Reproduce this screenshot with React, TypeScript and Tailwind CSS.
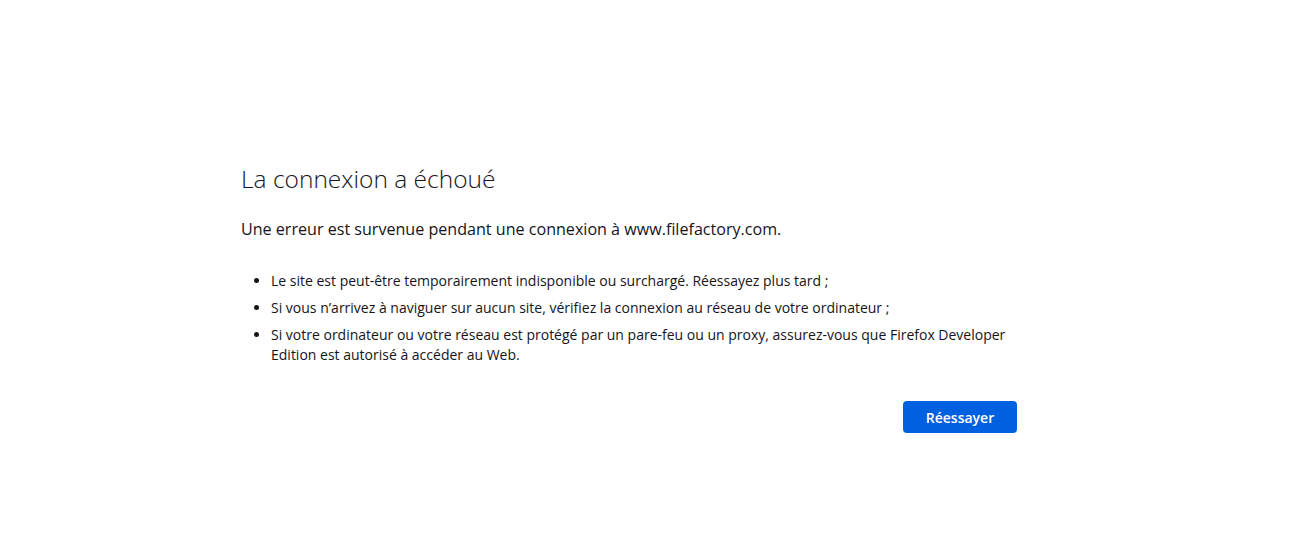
import React from 'react'

const items = [
  "Le site est peut-être temporairement indisponible ou surchargé. Réessayez plus tard ;",
  "Si vous n’arrivez à naviguer sur aucun site, vérifiez la connexion au réseau de votre ordinateur ;",
  "Si votre ordinateur ou votre réseau est protégé par un pare-feu ou un proxy, assurez-vous que Firefox Developer Edition est autorisé à accéder au Web.",
]

export default function App() {
  return (
    <div className="min-h-[549px] w-full bg-white text-[#15141a] font-['Open_Sans',sans-serif]">
      <div className="pl-[241px] pt-[161px]">
        <div className="w-[776px]">
          <h1 className="text-[24.5px] font-light leading-[36px]">La connexion a échoué</h1>
          <p className="mt-[20px] text-[16.1px] leading-[24px]">
            Une erreur est survenue pendant une connexion à www.filefactory.com.
          </p>
          <ul className="mt-[30px] flex flex-col gap-[7px] pl-[30px] pr-[6px] text-[14px] leading-[20px]">
            {items.map((t) => (
              <li key={t} className="list-disc">{t}</li>
            ))}
          </ul>
          <div className="mt-[36px] flex justify-end">
            <button className="h-[32px] w-[114px] rounded-[4px] bg-[#0061e0] text-[14px] font-semibold text-white">
              Réessayer
            </button>
          </div>
        </div>
      </div>
    </div>
  )
}
